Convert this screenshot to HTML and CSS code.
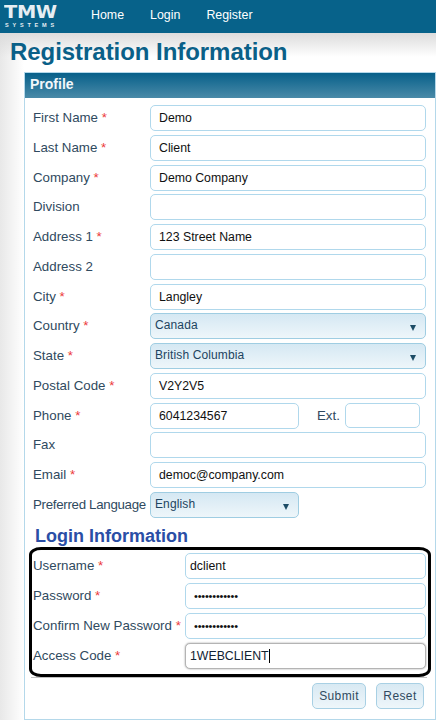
FILE: index.html
```html
<!DOCTYPE html>
<html lang="en">
<head>
<meta charset="utf-8">
<title>Registration Information</title>
<link rel="stylesheet" href="styles.css">
</head>
<body>
<header class="topbar">
  <div class="logo"><span class="logo-mark">TMW</span><span class="logo-sub">SYSTEMS</span></div>
  <nav class="nav"><a>Home</a><a>Login</a><a>Register</a></nav>
</header>
<main class="page">
  <h1 class="title">Registration Information</h1>
  <section class="panel">
    <div class="panel-head">Profile</div>
    <div class="form">
      <div class="row"><label class="lab">First Name <b>*</b></label><div class="field">Demo</div></div>
      <div class="row"><label class="lab">Last Name <b>*</b></label><div class="field">Client</div></div>
      <div class="row"><label class="lab">Company <b>*</b></label><div class="field">Demo Company</div></div>
      <div class="row"><label class="lab">Division</label><div class="field"></div></div>
      <div class="row"><label class="lab">Address 1 <b>*</b></label><div class="field">123 Street Name</div></div>
      <div class="row"><label class="lab">Address 2</label><div class="field"></div></div>
      <div class="row"><label class="lab">City <b>*</b></label><div class="field">Langley</div></div>
      <div class="row"><label class="lab">Country <b>*</b></label><div class="select">Canada<i class="arrow"></i></div></div>
      <div class="row"><label class="lab">State <b>*</b></label><div class="select">British Columbia<i class="arrow"></i></div></div>
      <div class="row"><label class="lab">Postal Code <b>*</b></label><div class="field">V2Y2V5</div></div>
      <div class="row"><label class="lab">Phone <b>*</b></label><div class="field short">6041234567</div><span class="ext">Ext.</span><div class="field tiny"></div></div>
      <div class="row"><label class="lab">Fax</label><div class="field"></div></div>
      <div class="row"><label class="lab">Email <b>*</b></label><div class="field">democ@company.com</div></div>
      <div class="row"><label class="lab tight">Preferred Language</label><div class="select short">English<i class="arrow"></i></div></div>
      <h2 class="subtitle">Login Information</h2>
      <div class="callout">
        <div class="row wide"><label class="lab">Username <b>*</b></label><div class="field plain">dclient</div></div>
        <div class="row wide"><label class="lab">Password <b>*</b></label><div class="field dots">&#8226;&#8226;&#8226;&#8226;&#8226;&#8226;&#8226;&#8226;&#8226;&#8226;&#8226;&#8226;</div></div>
        <div class="row wide"><label class="lab">Confirm New Password <b>*</b></label><div class="field dots">&#8226;&#8226;&#8226;&#8226;&#8226;&#8226;&#8226;&#8226;&#8226;&#8226;&#8226;&#8226;</div></div>
        <div class="row wide"><label class="lab">Access Code <b>*</b></label><div class="field plain focus"><span class="caret">1WEBCLIENT</span></div></div>
      </div>
      <div class="actions"><button class="btn">Submit</button><button class="btn">Reset</button></div>
    </div>
  </section>
</main>
</body>
</html>
```
FILE: styles.css
```css
* { box-sizing: border-box; }
html, body { margin: 0; padding: 0; height: 720px; overflow: hidden; }
body {
  width: 436px;
  font-family: "Liberation Sans", Arial, sans-serif;
  background: #fff;
}
.topbar {
  height: 33px;
  background: #07628a;
  display: flex;
  align-items: center;
  padding-left: 4px;
}
.logo { width: 87px; align-self: flex-start; display: flex; flex-direction: column; color: #e6eef3; padding-top: 4px; }
.logo-mark { font-family: "DejaVu Sans", sans-serif; font-size: 17px; line-height: 17px; height: 17px; font-weight: bold; letter-spacing: -.3px; transform: scaleX(1.14); transform-origin: left; }
.logo-sub { margin-top: 1px; font-size: 5.5px; line-height: 6px; letter-spacing: 3.8px; font-weight: bold; margin-left: 1px; }
.nav { display: flex; gap: 26px; font-size: 12.4px; color: #fff; margin-top: -4px; }
.page {
  height: 687px;
  padding: 5px 0 0 10px;
  background:
    linear-gradient(to bottom, #dcdcdc 0, rgba(255,255,255,0) 24px),
    linear-gradient(to right, #e8e8e8 0, #ffffff 24px);
}
.title {
  margin: 0 0 6px;
  font-size: 24px;
  line-height: 28px;
  font-weight: bold;
  letter-spacing: -.05px;
  color: #0a6088;
}
.panel {
  margin-left: 14px;
  width: 412px;
  height: 648px;
  background: #fff;
  border: 1px solid #b4d8ea;
}
.panel-head {
  height: 25px;
  padding-left: 5px;
  line-height: 23px;
  font-size: 14px;
  font-weight: bold;
  color: #f2f7fa;
  background: linear-gradient(to bottom, #07608a, #4a8aa8);
}
.form { padding: 7px 0 0 8px; }
.row {
  display: flex;
  align-items: center;
  height: 26px;
  margin-bottom: 3.75px;
}
.lab { width: 117px; flex: none; font-size: 13.3px; margin-top: -1px; color: #2f4a60; white-space: nowrap; }
.lab b { color: #ec3a3a; font-weight: normal; }
.tight { letter-spacing: -.3px; }
.field, .select {
  width: 276px;
  height: 26px;
  border: 1px solid #b0d8ec;
  border-radius: 5px;
  background: #fff;
  font-size: 12.3px;
  line-height: 24px;
  color: #111;
  padding-left: 8px;
}
.select {
  position: relative;
  padding-left: 4px;
  line-height: 23px;
  font-size: 12px;
  letter-spacing: .12px;
  color: #1d4460;
  border-color: #9fcde2;
  background: linear-gradient(to bottom, #d5e8f3, #eef6fa);
}
.arrow {
  position: absolute;
  right: 9px;
  top: 11px;
  border-left: 3.5px solid transparent;
  border-right: 3.5px solid transparent;
  border-top: 6px solid #1d4c66;
}
.short { width: 149px; flex: none; }
.tiny { width: 75px; flex: none; height: 25px; }
.ext { width: 46px; flex: none; padding-left: 18px; margin-top: -1px; font-size: 13.3px; color: #2f4a60; }
.subtitle {
  margin: 0;
  padding: 3px 0 0 2px;
  font-size: 18px;
  line-height: 22px;
  font-weight: bold;
  color: #2a4ea6;
  height: 25px;
}
.callout {
  margin-left: -4px;
  width: 402px;
  height: 130px;
  border: 3px solid #000;
  border-radius: 12px / 8px;
  padding: 3px 0 0 1px;
}
.wide { margin-bottom: 4px; }
.wide .lab { width: 152px; margin-top: 0; }
.wide .field { width: 241px; }
.plain { padding-left: 4px; }
.dots { font-size: 11px; padding-left: 8px; letter-spacing: -.2px; color: #111; }
.focus { border-color: #b4b4b4; box-shadow: 0 0 2px #999; color: #123; }
.caret { border-right: 1px solid #000; }
.actions {
  width: 396px;
  margin-left: -2px;
  border-top: 1px solid #c0c0c0;
  padding: 5px 3px 0 0;
  display: flex;
  justify-content: flex-end;
  gap: 10px;
}
.btn {
  height: 26px;
  width: 54px;
  padding: 0;
  border: 1px solid #a8d0e4;
  border-radius: 5px;
  background: linear-gradient(to bottom, #d8e9f3, #eef6fa);
  font: 12px "Liberation Sans", Arial, sans-serif;
  letter-spacing: .4px;
  color: #2f4a60;
}
.btn + .btn { width: 48px; }
```
